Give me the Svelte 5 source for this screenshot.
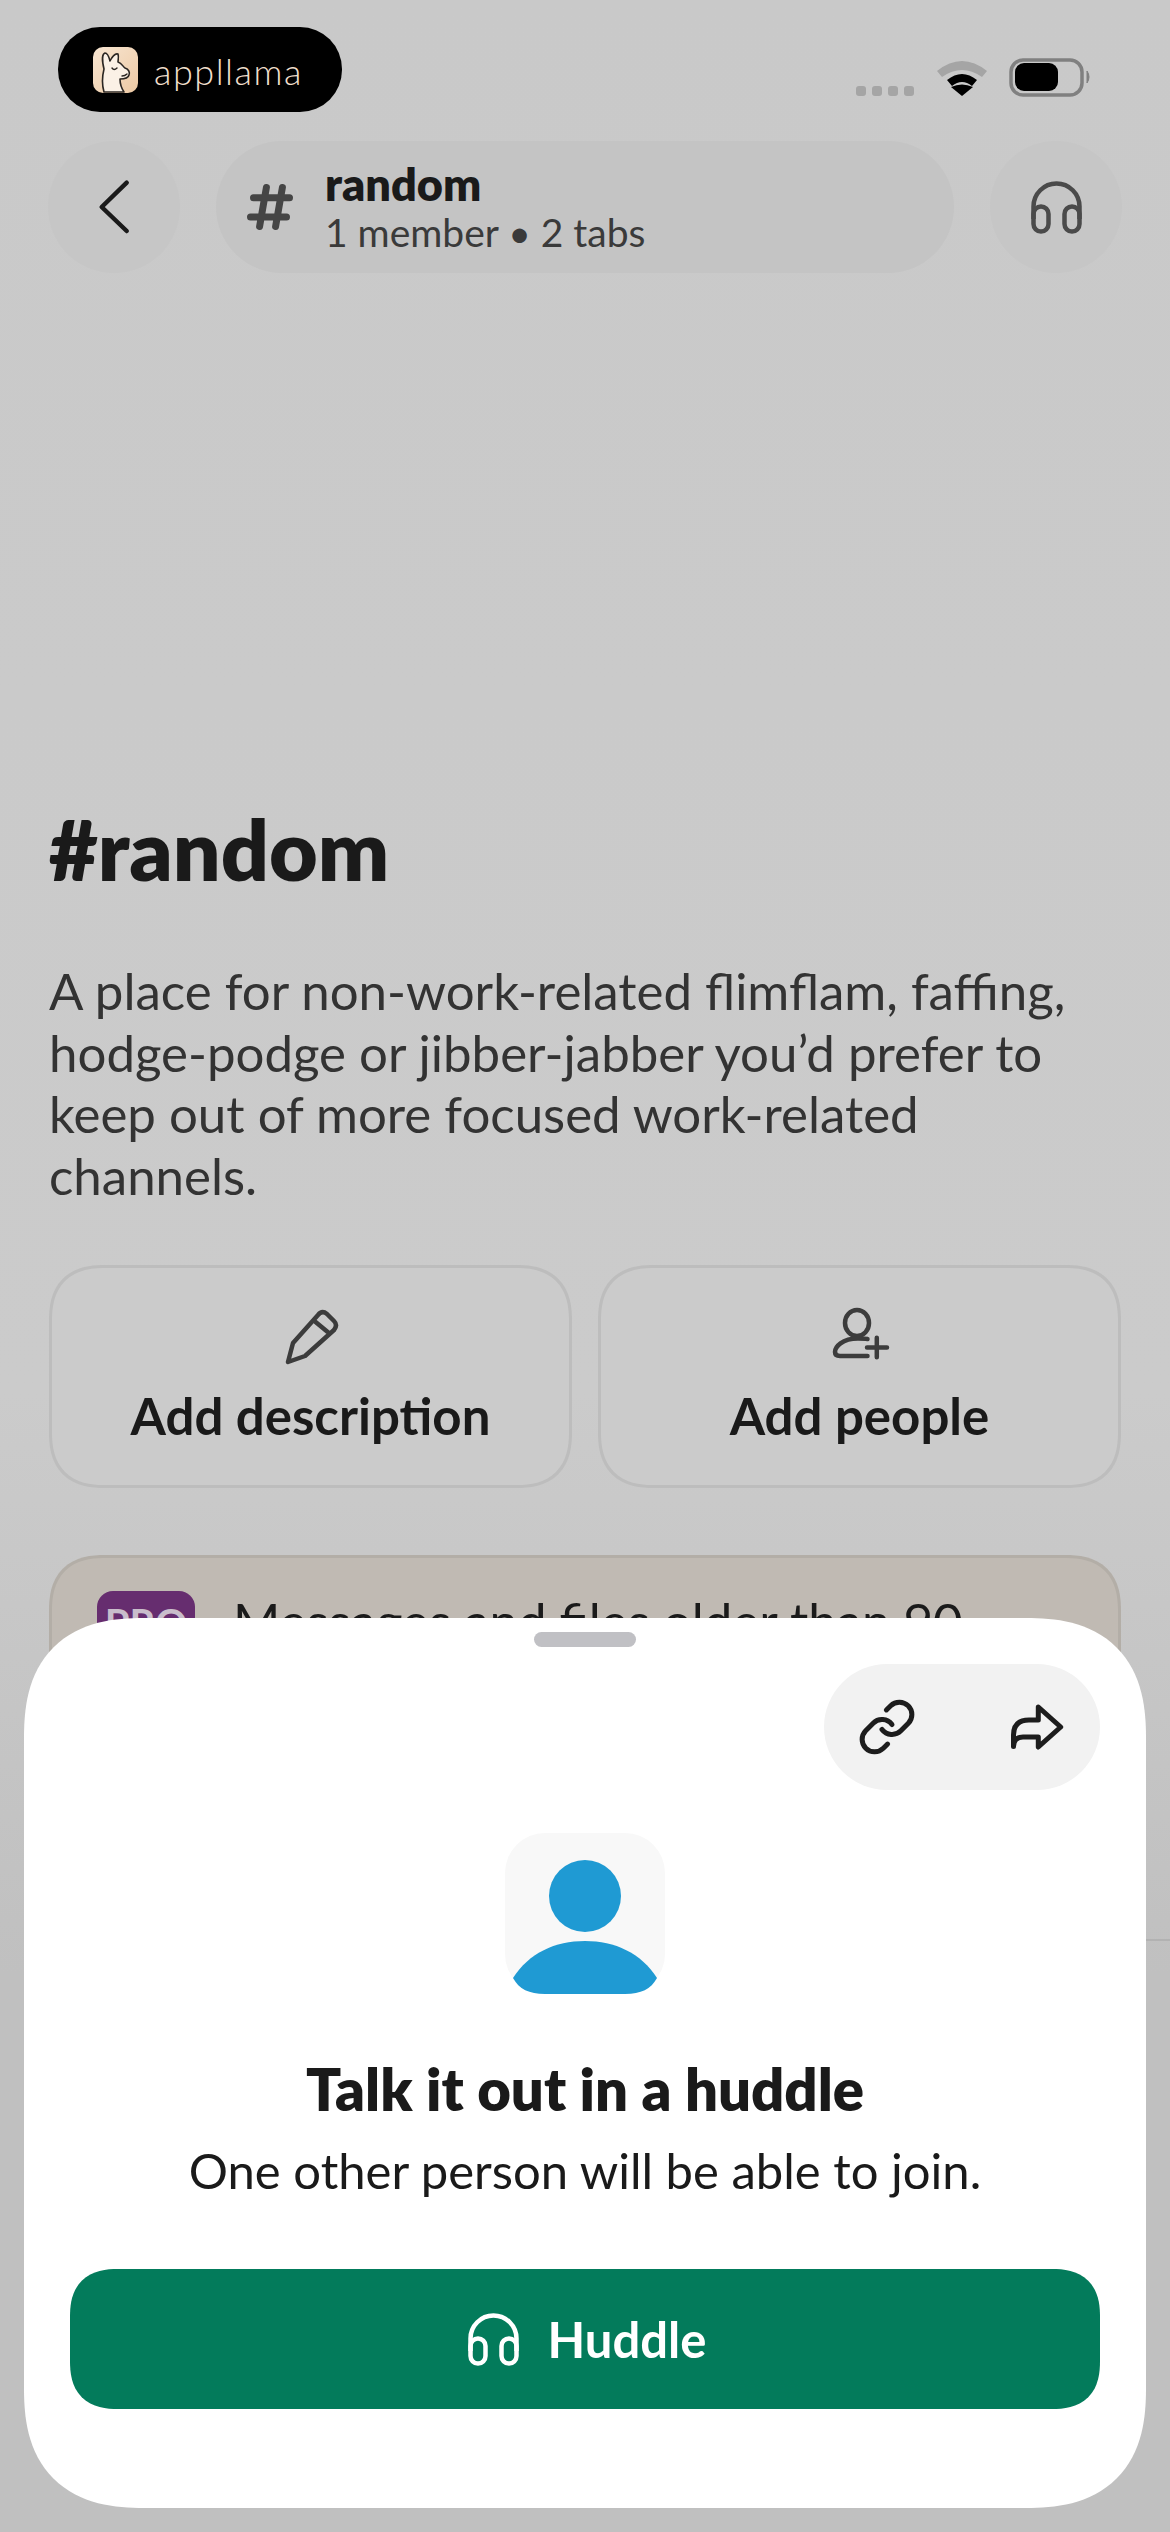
<script>
  const description =
    'A place for non-work-related flimflam, faffing, hodge-podge or jibber-jabber you’d prefer to keep out of more focused work-related channels.';
</script>

<div class="screen">
  <div class="status">
    <div class="brand">
      <svg class="llama" viewBox="0 0 45 46" aria-hidden="true">
        <defs>
          <linearGradient id="tile" x1="0" y1="0" x2="1" y2="1">
            <stop offset="0" stop-color="#f8e6d2" />
            <stop offset="1" stop-color="#edc9a4" />
          </linearGradient>
        </defs>
        <rect width="45" height="46" rx="10" fill="url(#tile)" />
        <path
          d="M11 45C9 38 9 30 11 22C9 14 9 7 12 6C15 6 16 10 17 14C19 10 22 6 25 7C26 10 25 13 25 15C29 16 30 20 32 21C36 22 37 26 36 28C35 32 30 32 27 32C27 38 29 42 31 45Z"
          fill="#fbf1e6"
          stroke="#2b2622"
          stroke-width="1.6"
          stroke-linejoin="round"
        />
        <path d="M19 21Q21 24 24 21M29 29Q32 29 34 27" fill="none" stroke="#2b2622" stroke-width="1.4" stroke-linecap="round" />
      </svg>
      <span class="wordmark">appllama</span>
    </div>
    <svg class="status-icons" viewBox="0 0 237 40" aria-hidden="true">
      <rect x="1" y="28" width="10" height="10" rx="3" fill="#a5a5a5" />
      <rect x="17" y="28" width="10" height="10" rx="3" fill="#a5a5a5" />
      <rect x="33" y="28" width="10" height="10" rx="3" fill="#a5a5a5" />
      <rect x="49" y="28" width="10" height="10" rx="3" fill="#a5a5a5" />
      <path d="M82 13Q107-7 132 13L127 19Q107 5 87 19Z" fill="#a5a5a5" />
      <path d="M92 22Q107 10 122 22L117 28Q107 20 97 28Z" fill="#000" />
      <path d="M107 38L96 29Q107 24 118 29Z" fill="#000" />
      <rect x="156" y="2" width="71" height="35" rx="12" fill="none" stroke="#808080" stroke-width="3.5" />
      <rect x="160" y="5" width="43" height="28" rx="9" fill="#000" />
      <path d="M232 13Q236 19 232 25Z" fill="#808080" stroke="#808080" stroke-width="1" />
    </svg>
  </div>

  <header class="topbar">
    <button class="round">
      <svg width="132" height="132" viewBox="0 0 132 132" aria-hidden="true">
        <path d="M78.7 41.7L53.7 66 78.7 90" fill="none" stroke="#1a1a1a" stroke-width="4.5" stroke-linecap="round" stroke-linejoin="round" />
      </svg>
    </button>
    <div class="channel">
      <svg class="hash" width="60" height="60" viewBox="0 0 60 60" aria-hidden="true">
        <path d="M16.5 20.7H52.5M13.5 40H49.5M29.4 10.5 22.6 49.5M45.4 10.5 38.6 49.5" fill="none" stroke="#454545" stroke-width="7" stroke-linecap="round" />
      </svg>
      <div class="channel-text">
        <div class="channel-name">random</div>
        <div class="channel-meta">1 member • 2 tabs</div>
      </div>
    </div>
    <button class="round">
      <svg width="51" height="53" viewBox="0 0 51 53" aria-hidden="true">
        <path d="M2.5 38V25.5a23 23 0 0 1 46 0V38" fill="none" stroke="#4a4a4a" stroke-width="4.5" />
        <rect x="2.5" y="25.5" width="15" height="25" rx="7.5" fill="none" stroke="#4a4a4a" stroke-width="4.5" />
        <rect x="33.5" y="25.5" width="15" height="25" rx="7.5" fill="none" stroke="#4a4a4a" stroke-width="4.5" />
      </svg>
    </button>
  </header>

  <main class="intro">
    <h1>#random</h1>
    <p class="description">{description}</p>

    <div class="actions">
      <button class="action">
        <svg width="60" height="60" viewBox="0 0 60 60" aria-hidden="true">
          <path d="M7 57L12 38 37 10Q41 5 46 9L53 16Q57 20 53 25L24 51ZM34.6 17L46.7 27" fill="none" stroke="#3c3c3c" stroke-width="4.5" stroke-linejoin="round" stroke-linecap="round" />
        </svg>
        <span>Add description</span>
      </button>
      <button class="action">
        <svg width="60" height="60" viewBox="0 0 60 60" aria-hidden="true">
          <ellipse cx="27" cy="18" rx="12" ry="13" fill="none" stroke="#3c3c3c" stroke-width="4.5" />
          <path d="M37.5 34Q35 33.5 28 33.5C12 33.5 5 42 5 47Q5 51 10 51H37.5M46.8 32.7V52.3M37 42.5H57" fill="none" stroke="#3c3c3c" stroke-width="4.5" stroke-linecap="round" />
        </svg>
        <span>Add people</span>
      </button>
    </div>

    <div class="banner">
      <span class="pro">PRO</span>
      <span class="banner-text">Messages and files older than 90</span>
    </div>
  </main>

  <div class="divider"></div>

  <section class="sheet">
    <div class="handle"></div>
    <div class="share">
      <svg width="60" height="60" viewBox="0 0 24 24" aria-hidden="true">
        <path d="M10 13a5 5 0 0 0 7.54.54l3-3a5 5 0 0 0-7.07-7.07l-1.72 1.71M14 11a5 5 0 0 0-7.54-.54l-3 3a5 5 0 0 0 7.07 7.07l1.71-1.71" fill="none" stroke="#1d1d1d" stroke-width="2" stroke-linecap="round" stroke-linejoin="round" />
      </svg>
      <svg width="60" height="60" viewBox="0 0 60 60" aria-hidden="true">
        <path d="M31.3 10L53.7 30 31.3 50V40H16Q6.5 40 6.5 49.5V38Q6.5 23 22 23H31.3Z" fill="none" stroke="#1d1d1d" stroke-width="5" stroke-linejoin="round" />
      </svg>
    </div>

    <svg class="avatar" width="160" height="161" viewBox="0 0 160 161" aria-hidden="true">
      <rect width="160" height="161" rx="40" fill="#f8f8f8" />
      <circle cx="80" cy="63" r="36" fill="#1f9ad3" />
      <path d="M8 145C24 120 50 108 80 108C110 108 136 120 152 145C146 156 136 161 120 161H40C24 161 14 156 8 145Z" fill="#1f9ad3" />
    </svg>

    <h2>Talk it out in a huddle</h2>
    <p class="sub">One other person will be able to join.</p>

    <button class="huddle">
      <svg width="51" height="53" viewBox="0 0 51 53" aria-hidden="true">
        <path d="M2.5 38V25.5a23 23 0 0 1 46 0V38" fill="none" stroke="#fff" stroke-width="4.5" />
        <rect x="2.5" y="25.5" width="15" height="25" rx="7.5" fill="none" stroke="#fff" stroke-width="4.5" />
        <rect x="33.5" y="25.5" width="15" height="25" rx="7.5" fill="none" stroke="#fff" stroke-width="4.5" />
      </svg>
      <span>Huddle</span>
    </button>
  </section>
</div>

<style>
  :global(body) {
    margin: 0;
  }

  .screen {
    position: relative;
    width: 1170px;
    height: 2532px;
    overflow: hidden;
    background: linear-gradient(#c9c9c9 0%, #cbcbcb 55%, #c0c0c0 78%, #c0c0c0 100%);
    font-family: Lato, 'Liberation Sans', sans-serif;
    color: #1a1a1a;
  }

  button {
    font: inherit;
    color: inherit;
    border: 0;
    padding: 0;
  }

  /* status bar */
  .status {
    display: flex;
    justify-content: space-between;
    align-items: flex-start;
    padding: 27px 78px 0 58px;
  }

  .brand {
    display: flex;
    align-items: center;
    gap: 16px;
    box-sizing: border-box;
    width: 284px;
    height: 85px;
    padding-left: 35px;
    border-radius: 42px;
    background: #000;
  }

  .llama {
    width: 45px;
    height: 46px;
  }

  .wordmark {
    padding-top: 2px;
    font-weight: 300;
    font-size: 36px;
    letter-spacing: 1.5px;
    color: #f0dfcc;
  }

  .status-icons {
    width: 237px;
    height: 40px;
    margin-top: 31px;
  }

  /* nav row */
  .topbar {
    display: flex;
    gap: 36px;
    margin-top: 29px;
    padding: 0 48px;
  }

  .round {
    display: flex;
    align-items: center;
    justify-content: center;
    flex: none;
    width: 132px;
    height: 132px;
    border-radius: 50%;
    background: #c6c6c6;
  }

  .channel {
    flex: 1;
    display: flex;
    align-items: center;
    gap: 28px;
    height: 132px;
    padding-left: 21px;
    border-radius: 66px;
    background: #c4c4c4;
  }

  .channel-name {
    font-weight: 800;
    font-size: 45px;
    line-height: 50px;
  }

  .channel-meta {
    font-size: 39px;
    line-height: 47px;
    color: #3a3a3a;
  }

  /* channel intro */
  .intro {
    padding: 0 49px;
    margin-top: 530px;
  }

  h1 {
    margin: 0;
    font-weight: 800;
    font-size: 84px;
    line-height: 92px;
  }

  .description {
    margin: 65px 0 0;
    font-size: 51px;
    line-height: 61.5px;
    color: #333;
  }

  .actions {
    display: grid;
    grid-template-columns: 1fr 1fr;
    gap: 26px;
    margin-top: 59px;
  }

  .action {
    display: flex;
    flex-direction: column;
    align-items: center;
    box-sizing: border-box;
    height: 223px;
    padding-top: 37px;
    border: 3px solid #bdbdbd;
    border-radius: 56px;
    corner-shape: superellipse(1.3);
    background: #cbcbcb;
    font-weight: 700;
    font-size: 51px;
    line-height: 60px;
  }

  .action span {
    margin-top: 21px;
  }

  .banner {
    display: flex;
    align-items: flex-start;
    gap: 38px;
    box-sizing: border-box;
    height: 345px;
    margin-top: 67px;
    padding: 33px 45px;
    border: 3px solid #b3aea7;
    border-radius: 56px;
    corner-shape: superellipse(1.3);
    background: #c0bab3;
  }

  .pro {
    width: 98px;
    height: 70px;
    border-radius: 16px;
    background: #662d6f;
    color: #c9bdcb;
    font-weight: 700;
    font-size: 40px;
    line-height: 64px;
    text-align: center;
  }

  .banner-text {
    font-size: 51px;
    line-height: 60px;
  }

  .divider {
    height: 2px;
    margin: 39px 0 0 1100px;
    background: #b2b2b2;
  }

  /* huddle sheet, sits over the page */
  .sheet {
    position: absolute;
    left: 24px;
    right: 24px;
    top: 1618px;
    bottom: 24px;
    display: flex;
    flex-direction: column;
    align-items: center;
    border-radius: 120px;
    corner-shape: superellipse(1.3);
    background: #fff;
  }

  .handle {
    width: 102px;
    height: 15px;
    margin-top: 14px;
    border-radius: 8px;
    background: #c0c0c4;
  }

  .share {
    align-self: flex-end;
    display: flex;
    align-items: center;
    gap: 90px;
    box-sizing: border-box;
    width: 276px;
    height: 126px;
    margin: 17px 46px 0 0;
    padding-left: 33px;
    border-radius: 63px;
    background: #f2f2f2;
  }

  .avatar {
    margin-top: 43px;
  }

  h2 {
    margin: 61px 0 0;
    font-weight: 800;
    font-size: 58px;
    line-height: 68px;
  }

  .sub {
    margin: 18px 0 0;
    font-size: 49px;
    line-height: 58px;
  }

  .huddle {
    display: flex;
    align-items: center;
    justify-content: center;
    gap: 29px;
    box-sizing: border-box;
    width: 1030px;
    height: 140px;
    margin-top: 70px;
    padding-left: 4px;
    border-radius: 48px;
    corner-shape: superellipse(1.3);
    background: #037b5b;
    color: #fff;
    font-weight: 700;
    font-size: 49px;
  }
</style>
